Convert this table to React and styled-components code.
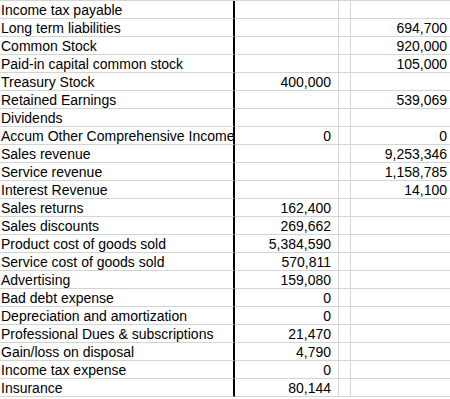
import React from "react";
import styled, { createGlobalStyle } from "styled-components";

const Global = createGlobalStyle`
  html, body {
    margin: 0;
    padding: 0;
    background: #fff;
    overflow: hidden;
  }
`;

const Sheet = styled.div`
  display: grid;
  grid-template-columns: 235px 104px 12px 104px;
  width: 460px;
  border-top: 1px solid #d4d4d4;
  font-family: "Liberation Sans", Arial, sans-serif;
  font-size: 14px;
  color: #000;
`;

const Cell = styled.div`
  box-sizing: content-box;
  height: 16px;
  line-height: 16px;
  padding: ${({ $align }) => ($align === "right" ? "1px 7px 0 0" : "1px 0 0 1px")};
  border-bottom: 1px solid #d4d4d4;
  border-right: ${({ $edge }) => ($edge ? "2px solid #000" : "1px solid #d4d4d4")};
  text-align: ${({ $align }) => $align || "left"};
  white-space: nowrap;
  overflow: hidden;
`;

const rows = [
  ["Income tax payable", "", ""],
  ["Long term liabilities", "", "694,700"],
  ["Common Stock", "", "920,000"],
  ["Paid-in capital common stock", "", "105,000"],
  ["Treasury Stock", "400,000", ""],
  ["Retained Earnings", "", "539,069"],
  ["Dividends", "", ""],
  ["Accum Other Comprehensive Income", "0", "0"],
  ["Sales revenue", "", "9,253,346"],
  ["Service revenue", "", "1,158,785"],
  ["Interest Revenue", "", "14,100"],
  ["Sales returns", "162,400", ""],
  ["Sales discounts", "269,662", ""],
  ["Product cost of goods sold", "5,384,590", ""],
  ["Service cost of goods sold", "570,811", ""],
  ["Advertising", "159,080", ""],
  ["Bad debt expense", "0", ""],
  ["Depreciation and amortization", "0", ""],
  ["Professional Dues & subscriptions", "21,470", ""],
  ["Gain/loss on disposal", "4,790", ""],
  ["Income tax expense", "0", ""],
  ["Insurance", "80,144", ""],
];

export default function App() {
  return (
    <>
      <Global />
      <Sheet>
        {rows.map(([label, debit, credit], i) => (
          <React.Fragment key={i}>
            <Cell $edge>{label}</Cell>
            <Cell $align="right">{debit}</Cell>
            <Cell />
            <Cell $align="right">{credit}</Cell>
          </React.Fragment>
        ))}
      </Sheet>
    </>
  );
}
